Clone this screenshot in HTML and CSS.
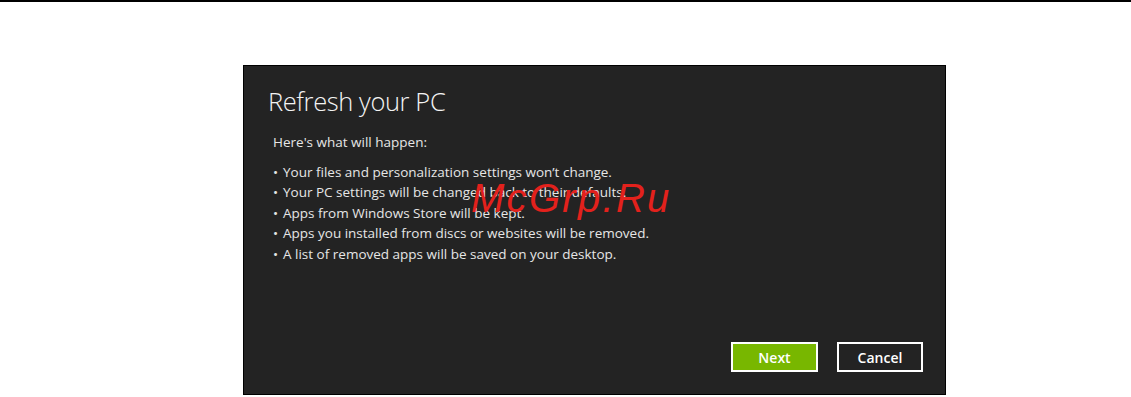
FILE: index.html
```html
<!DOCTYPE html>
<html lang="en">
<head>
<meta charset="utf-8">
<title>Refresh your PC</title>
<link rel="stylesheet" href="styles.css">
</head>
<body>
<div class="topbar"></div>
<div class="panel">
  <h1 class="title">Refresh your PC</h1>
  <p class="intro">Here's what will happen:</p>
  <ul class="list">
    <li>Your files and personalization settings won’t change.</li>
    <li>Your PC settings will be changed back to their defaults.</li>
    <li>Apps from Windows Store will be kept.</li>
    <li>Apps you installed from discs or websites will be removed.</li>
    <li>A list of removed apps will be saved on your desktop.</li>
  </ul>
  <div class="actions">
    <button class="btn btn-primary">Next</button>
    <button class="btn">Cancel</button>
  </div>
  <div class="watermark">McGrp.Ru</div>
</div>
</body>
</html>
```

FILE: styles.css
```css
html, body {
  margin: 0;
  padding: 0;
  background: #fff;
}
body {
  font-family: "Open Sans", "Noto Sans", sans-serif;
  overflow: hidden;
}
.topbar {
  height: 2px;
  background: #000;
}
.panel {
  position: relative;
  box-sizing: border-box;
  margin: 63px 0 0 243px;
  width: 703px;
  height: 330px;
  border: 1px solid #000;
  background: #232323;
  color: #e6e6e6;
  padding: 0 22px 22px 24px;
  display: flex;
  flex-direction: column;
}
.title {
  margin: 18px 0 0 0;
  font-size: 25.5px;
  font-weight: 300;
  letter-spacing: -0.4px;
  line-height: 34px;
  color: #f4f4f4;
}
.intro {
  margin: 14px 0 0 5px;
  font-size: 13.5px;
  line-height: 20px;
}
.list {
  list-style: none;
  margin: 10px 0 0 5px;
  padding: 0;
  font-size: 13.5px;
  line-height: 20.4px;
}
.list li {
  height: 20.4px;
}
.list li::before {
  content: "•";
  display: inline-block;
  width: 10px;
}
.actions {
  margin-top: auto;
  display: flex;
  justify-content: flex-end;
  gap: 19px;
}
.btn {
  box-sizing: border-box;
  width: 86px;
  height: 30px;
  border: 2px solid #fff;
  background: #232323;
  color: #fff;
  font-family: "Open Sans", "Noto Sans", sans-serif;
  font-size: 14px;
  font-weight: 600;
  padding: 0;
}
.btn-primary {
  width: 87px;
  background: #78b700;
}
.watermark {
  position: absolute;
  left: 227px;
  top: 110px;
  font-family: "Liberation Sans", Arial, sans-serif;
  font-style: italic;
  font-size: 40px;
  letter-spacing: 2.3px;
  color: #e3211c;
  line-height: 44px;
}
```
